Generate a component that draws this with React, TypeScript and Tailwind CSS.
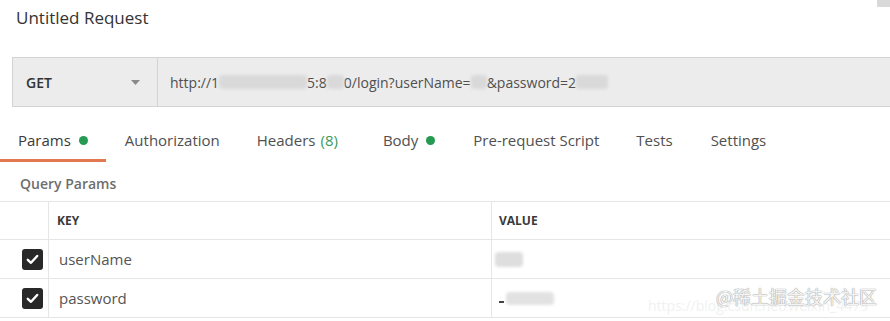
import React from 'react';

const Blur: React.FC<{ w: number }> = ({ w }) => (
  <span className="inline-block h-[14px] rounded-sm bg-[#d9d9d9] blur-[1.5px] align-middle" style={{ width: w }} />
);

const Check: React.FC = () => (
  <div className="w-[21px] h-[21px] rounded-[3px] bg-[#282828] flex items-center justify-center">
    <svg width="13" height="11" viewBox="0 0 13 11" fill="none">
      <path d="M1.8 5.8 L5 8.8 L11.2 2" stroke="white" strokeWidth="2.4" strokeLinecap="round" strokeLinejoin="round" />
    </svg>
  </div>
);

const Dot: React.FC = () => <span className="ml-[8px] inline-block w-[9px] h-[9px] rounded-full bg-[#249a52]" />;

const tabs = [
  { label: 'Authorization', pad: 'pl-[19px] pr-[19px]' },
  { label: 'Headers', pad: 'pl-[18px] pr-[19px]' },
  { label: 'Body', pad: 'pl-[26px] pr-[19px]' },
  { label: 'Pre-request Script', pad: 'pl-[19px] pr-[19px]' },
  { label: 'Tests', pad: 'pl-[18px] pr-[19px]' },
  { label: 'Settings', pad: 'pl-[19px] pr-[19px]' },
];

const App: React.FC = () => {
  return (
    <div className="relative w-[890px] h-[321px] overflow-hidden bg-white font-['Open_Sans',sans-serif]">
      {/* title */}
      <div className="h-[57px] pl-[16px] pt-[6px] text-[17px] leading-[24px] text-[#333]">Untitled Request</div>

      {/* url bar */}
      <div className="ml-[12px] h-[50px] flex border border-r-0 border-[#d3d3d3] bg-[#ececec]">
        <div className="w-[145px] flex items-center justify-between pl-[13px] pr-[17px] border-r border-[#d3d3d3]">
          <span className="text-[14px] font-semibold text-[#333]">GET</span>
          <svg width="9" height="5" viewBox="0 0 9 5">
            <path d="M0 0 H9 L4.5 5 Z" fill="#8a8a8a" />
          </svg>
        </div>
        <div className="flex items-center pl-[12px] text-[14px] text-[#505050] whitespace-nowrap">
          <span>http://1</span>
          <Blur w={88} />
          <span>5:8</span>
          <Blur w={17} />
          <span>0/login?userName=</span>
          <Blur w={16} />
          <span>&amp;password=2</span>
          <Blur w={32} />
        </div>
      </div>

      {/* tabs */}
      <div className="mt-[14px] flex text-[15px] text-[#505050]">
        <div className="h-[38px] pl-[18px] pr-[18px] flex items-center border-b-[3px] border-[#e0794f] text-[#3a3a3a] box-content">
          Params
          <Dot />
        </div>
        {tabs.map((t) => (
          <div key={t.label} className={`h-[38px] ${t.pad} flex items-center box-content border-b-[3px] border-transparent`}>
            {t.label}
            {t.label === 'Headers' && <span className="ml-[5px] text-[#3b9a5c]">(8)</span>}
            {t.label === 'Body' && <Dot />}
          </div>
        ))}
      </div>

      {/* query params */}
      <div className="h-[39px] pl-[20px] pt-[3px] flex items-center text-[14px] font-semibold text-[#6e6e6e]">Query Params</div>

      {/* table */}
      <div className="border-t border-[#e6e6e6]">
        <div className="h-[38px] grid grid-cols-[49px_443px_1fr] border-b border-[#e6e6e6]">
          <div className="border-r border-[#e6e6e6]" />
          <div className="pl-[8px] flex items-center text-[12px] font-bold text-[#3a3a3a] border-r border-[#e6e6e6]">KEY</div>
          <div className="pl-[7px] flex items-center text-[12px] font-bold text-[#3a3a3a]">VALUE</div>
        </div>
        <div className="h-[39px] grid grid-cols-[49px_443px_1fr] border-b border-[#e6e6e6]">
          <div className="flex items-center justify-end pr-[5px] border-r border-[#e6e6e6]">
            <Check />
          </div>
          <div className="pl-[10px] flex items-center text-[15px] text-[#555] border-r border-[#e6e6e6]">userName</div>
          <div className="pl-[3px] flex items-center">
            <span className="inline-block w-[28px] h-[15px] rounded-sm bg-[#dedede] blur-[1.5px]" />
          </div>
        </div>
        <div className="h-[39px] grid grid-cols-[49px_443px_1fr] border-b border-[#e6e6e6]">
          <div className="flex items-center justify-end pr-[5px] border-r border-[#e6e6e6]">
            <Check />
          </div>
          <div className="pl-[10px] flex items-center text-[15px] text-[#555] border-r border-[#e6e6e6]">password</div>
          <div className="pl-[7px] flex items-center gap-[2px]">
            <span className="inline-block w-[5px] h-[2px] mt-[8px] bg-[#444]" />
            <span className="inline-block w-[48px] h-[13px] rounded-sm bg-[#e2e2e2] blur-[1.5px]" />
          </div>
        </div>
      </div>

      {/* watermark */}
      <div className="absolute left-[648px] top-[295px] text-[14px] text-[#f1f1f1] whitespace-nowrap">https://blog.csdn.net/weixin_4479</div>
      <div className="absolute left-[716px] top-[283px] text-[18px] text-[#f4f4f4] [text-shadow:0_0_1px_#9a9a9a,0_0_1px_#9a9a9a] font-['Noto_Sans_CJK_SC',sans-serif] whitespace-nowrap">
        @稀土掘金技术社区
      </div>

      <div className="absolute right-0 top-0 w-[13px] h-[7px] bg-[#d9d9d9]" />
    </div>
  );
};

export default App;
